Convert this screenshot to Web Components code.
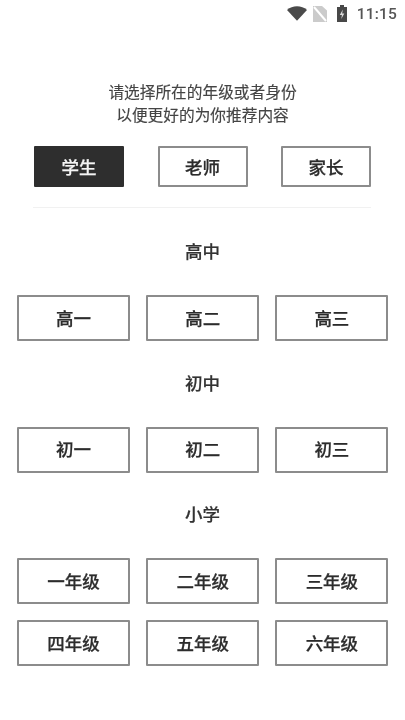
<!DOCTYPE html>
<html lang="zh"><head><meta charset="utf-8">
<style>html,body{margin:0;padding:0;background:#fff}body{font-family:"Noto Sans CJK SC","Liberation Sans",sans-serif;width:405px;height:720px;overflow:hidden}</style>
</head><body>
<app-screen>
<status-bar></status-bar>
<intro-text>请选择所在的年级或者身份<br>以便更好的为你推荐内容</intro-text>
<role-row>
<choice-box role="role" active>学生</choice-box>
<choice-box role="role">老师</choice-box>
<choice-box role="role">家长</choice-box>
</role-row>
<thin-rule></thin-rule>
<grade-group heading="高中">
<choice-box>高一</choice-box><choice-box>高二</choice-box><choice-box>高三</choice-box>
</grade-group>
<grade-group heading="初中">
<choice-box>初一</choice-box><choice-box>初二</choice-box><choice-box>初三</choice-box>
</grade-group>
<grade-group heading="小学">
<choice-box>一年级</choice-box><choice-box>二年级</choice-box><choice-box>三年级</choice-box>
<choice-box>四年级</choice-box><choice-box>五年级</choice-box><choice-box>六年级</choice-box>
</grade-group>
</app-screen>
<script>
function def(name,html){customElements.define(name,class extends HTMLElement{constructor(){super();this.attachShadow({mode:'open'}).innerHTML=typeof html==='function'?html(this):html;}})}
def('app-screen',`<style>:host{display:flex;flex-direction:column;width:405px;height:720px;background:#fff;filter:blur(.35px)}</style><slot></slot>`);
def('status-bar',`<style>:host{display:flex;align-items:center;justify-content:flex-end;height:27px;box-sizing:border-box;padding:0 8px 0 0;color:#555;font:500 15.500px "Roboto",sans-serif;letter-spacing:.2px}svg{display:block;flex:none}</style>
<svg width="20" height="15" viewBox="0 0 20 15" style="margin-right:6px"><path d="M0 4C2.800 1.500 6.200.3 10 .3s7.200 1.200 10 3.700L10 14.800z" fill="#4a4a4a"/></svg>
<svg width="14" height="16" viewBox="0 0 14 16" style="margin-right:10px"><path d="M0 0h9l5 4.500V16H0z" fill="#cbcbcb"/><path d="M1 1l12 14" stroke="#fff" stroke-width="2"/></svg>
<svg width="10" height="17" viewBox="0 0 10 17" style="margin-right:10px"><path d="M3 0h4v2h3v15H0V2h3z" fill="#484848"/><path d="M5.800 4.500 2.800 10h2.100L4.300 14 7.300 8.500H5.200z" fill="#ddd"/></svg>
<span>11:15</span>`);
def('intro-text',`<style>:host{display:block;margin-top:53px;text-align:center;font-size:15.700px;line-height:23px;color:#444;-webkit-text-stroke:.15px #444}</style><slot></slot>`);
def('role-row',`<style>:host{display:flex;justify-content:space-between;margin:20px 34px 0 34px}</style><slot></slot>`);
def('thin-rule',`<style>:host{display:block;height:1px;background:#f1f1f1;margin:20px 34px 1.500px 33px}</style>`);
def('grade-group',h=>`<style>:host{display:block}
h2{margin:0;height:85.500px;box-sizing:border-box;padding-top:25.500px;text-align:center;font-size:17.500px;font-weight:500;line-height:31px;color:#333;-webkit-text-stroke:.2px #333}
.g{display:grid;grid-template-columns:repeat(3,113px);column-gap:16.200px;row-gap:16px;padding-left:17px}</style>
<h2>${h.getAttribute('heading')}</h2><div class="g"><slot></slot></div>`);
def('choice-box',h=>{const r=h.getAttribute('role')==='role',a=h.hasAttribute('active');const c=a?'#f4f4f4':'#2c2c2c';return `<style>:host{display:flex;align-items:center;justify-content:center;box-sizing:border-box;
width:${r?'90px':'113px'};height:${r?'41px':'46px'};padding-bottom:${r?0:2}px;border:2px solid ${a?'#2e2e2e':'#8c8c8c'};background:${a?'#2e2e2e':'#fff'};color:${c};-webkit-text-stroke:.25px ${c};font-size:17.500px;font-weight:500;border-radius:1px}</style><slot></slot>`});
</script>
</body></html>
